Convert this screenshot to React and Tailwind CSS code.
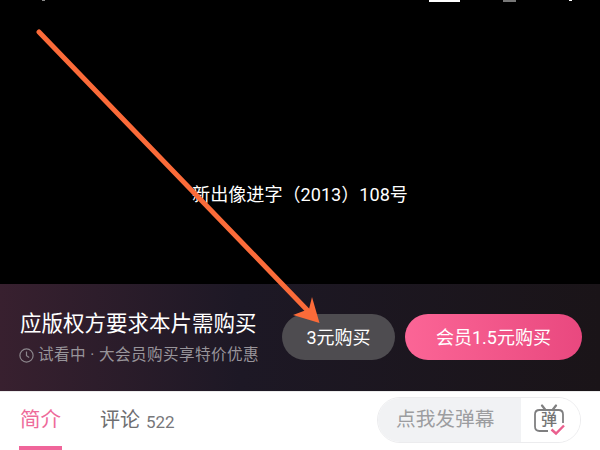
const cjk = "font-['Roboto','Noto_Sans_CJK_SC',sans-serif]";

function Clock() {
  return (
    <svg width="15" height="15" viewBox="0 0 15 15" fill="none" stroke="#8b868c" strokeWidth="1.2" className="shrink-0 -ml-[1px]">
      <circle cx="7.5" cy="7.5" r="6.6" />
      <path d="M7.5 3.6V7.7L10.2 9.6" />
    </svg>
  );
}

function DanmuIcon() {
  return (
    <div className="relative w-[32px] h-[32px]">
      <svg width="32" height="32" viewBox="0 0 32 32" fill="none" className="absolute inset-0">
        <path d="M9 1.5L12.5 6M23 1.5L19.5 6" stroke="#7f7f80" strokeWidth="2.2" strokeLinecap="round" />
        <path d="M15 27H6.5Q2 27 2 22.5V10.5Q2 6 6.5 6H25.5Q30 6 30 10.5V19" stroke="#7f7f80" strokeWidth="1.8" />
        <path d="M18.5 25.5L23 29.5L31 21.5" stroke="#ea5f8e" strokeWidth="2.4" />
      </svg>
      <span className="absolute left-[8px] top-[6px] text-[16px] leading-[20px] font-medium text-[#757575]">弹</span>
    </div>
  );
}

function Arrow() {
  return (
    <svg width="600" height="450" viewBox="0 0 600 450" className="absolute inset-0 pointer-events-none">
      <path d="M39 32L310 313" stroke="#fb6b39" strokeWidth="5" strokeLinecap="round" fill="none" />
      <path d="M319.5 323L312 297L309 309L293 315Z" fill="#fb6b39" />
    </svg>
  );
}

export default function App() {
  return (
    <div className={`relative w-[600px] h-[450px] overflow-hidden flex flex-col bg-white ${cjk}`}>
      <div className="relative h-[284px] bg-black flex items-center justify-center shrink-0">
        <div className="absolute top-0 left-[429px] w-[31px] h-[2px] bg-white" />
        <div className="absolute top-0 left-[503px] w-[13px] h-[2px] bg-[#777]" />
        <div className="absolute top-0 left-[569px] w-[3px] h-[1px] bg-white" />
        <div className="absolute top-0 left-[42px] w-[3px] h-[1px] bg-[#888]" />
        <span className="text-white text-[18.1px] leading-[24px] mt-[106px]">新出像进字（2013）108号</span>
      </div>
      <div className="h-[107px] shrink-0 flex items-center pl-[20px] pr-[18px] bg-gradient-to-r from-[#38202f] via-[#1d1825] via-40% to-[#1a1418]">
        <div className="flex flex-col flex-1 -mt-[1px]">
          <div className="text-[21.5px] leading-[30px] text-white">应版权方要求本片需购买</div>
          <div className="flex items-center gap-[4px] mt-[6px] text-[15.6px] leading-[20px] text-[#98949a]">
            <Clock />
            <span className="tracking-[0.4px] whitespace-nowrap">试看中 · 大会员购买享特价优惠</span>
          </div>
        </div>
        <div className="flex items-center gap-[10px] mt-[-1px]">
          <button className="w-[113px] h-[46px] rounded-full bg-[#4e4c50] text-white text-[18px]">3元购买</button>
          <button className="w-[177px] h-[46px] rounded-full bg-gradient-to-r from-[#fb6596] to-[#e9487f] text-white text-[18px]">会员1.5元购买</button>
        </div>
      </div>
      <div className="flex-1 flex items-start border-t border-[#ececec] pl-[19px] pr-[19px]">
        <div className="flex flex-col items-center w-[43px] pt-[13px] h-full justify-between">
          <span className="text-[20.5px] leading-[30px] text-[#ee6b9a]">简介</span>
          <div className="w-[43px] h-[4px] bg-[#f0659a]" />
        </div>
        <div className="flex items-end ml-[38px] pt-[13px]">
          <span className="text-[20px] leading-[30px] text-[#6e6e70]">评论</span>
          <span className="text-[17px] leading-[26px] text-[#77777a] ml-[6px]">522</span>
        </div>
        <div className="ml-auto mt-[5px] w-[204px] h-[46px] rounded-full border border-[#ececee] overflow-hidden flex">
          <div className="w-[143px] bg-[#f1f2f4] text-[#9c9da0] text-[19.7px] leading-[44px] pl-[18px]">点我发弹幕</div>
          <div className="flex-1 flex items-center justify-center pr-[3px] bg-white"><DanmuIcon /></div>
        </div>
      </div>
      <Arrow />
    </div>
  );
}
